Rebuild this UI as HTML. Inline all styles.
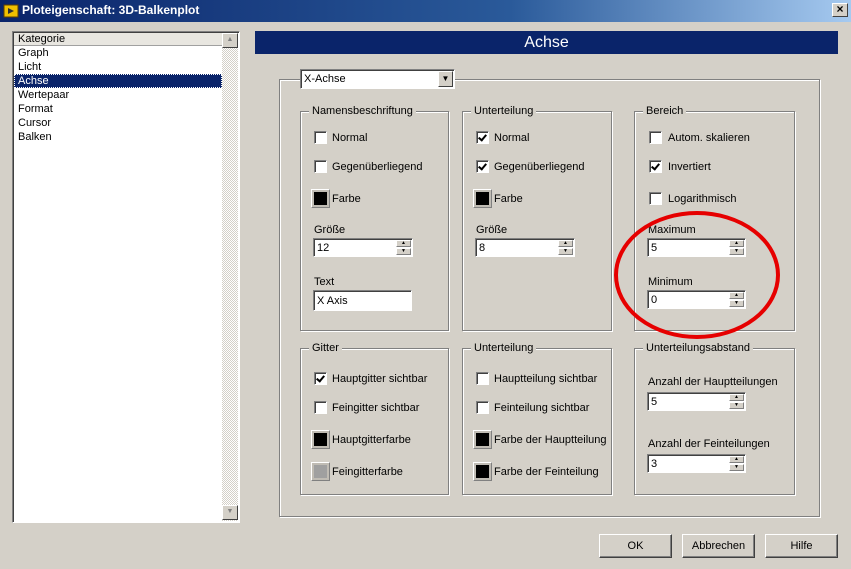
<!DOCTYPE html>
<html><head><meta charset="utf-8"><style>
*{box-sizing:border-box}
body{margin:0;width:851px;height:569px;background:#d4d0c8;font-family:"Liberation Sans",Tahoma,sans-serif;font-size:11px;color:#000;position:relative;overflow:hidden}
.a{position:absolute}
.title{left:0;top:0;width:851px;height:22px;background:linear-gradient(90deg,#0a246a 0%,#2a5a9a 60%,#a6caf0 100%);}
.title span{position:absolute;left:22px;top:3px;color:#fff;font-weight:bold;font-size:12px}
.close{right:3px;top:3px;width:16px;height:14px;background:#d4d0c8;border:1px solid;border-color:#fff #404040 #404040 #fff;font-size:12px;line-height:11px;text-align:center;font-weight:bold}
.grp{border:1px solid #808080;box-shadow:1px 1px 0 #fff, inset 1px 1px 0 #fff}
.gl{position:absolute;top:-7px;left:8px;background:#d4d0c8;padding:0 3px;line-height:13px}
.cb{position:absolute;width:13px;height:13px;background:#fff;border:1px solid;border-color:#808080 #fff #fff #808080;box-shadow:inset 1px 1px 0 #404040}
.cb.c::after{content:"";position:absolute;left:3px;top:1px;width:3px;height:6px;border:solid #000;border-width:0 2px 2px 0;transform:rotate(40deg)}
.lb{position:absolute;line-height:13px;white-space:nowrap}
.sw{position:absolute;width:19px;height:19px;background:#c0bcb4;border:1px solid;border-color:#fff #808080 #808080 #fff}
.sw i{position:absolute;left:2px;top:2px;width:13px;height:13px;background:#000}
.in{position:absolute;height:19px;background:#fff;border:1px solid;border-color:#808080 #fff #fff #808080;box-shadow:inset 1px 1px 0 #404040;padding:3px 3px 0;line-height:13px}
.sp{position:absolute;right:1px;top:1px;width:15px;height:15px}
.sp b{display:block;height:7px;background:#d4d0c8;border:1px solid;border-color:#fff #808080 #808080 #fff;margin-bottom:1px;font-size:5px;line-height:5px;text-align:center;font-weight:normal}
.btn{position:absolute;height:24px;width:73px;background:#d4d0c8;border:1px solid;border-color:#fff #404040 #404040 #fff;box-shadow:inset -1px -1px 0 #808080;text-align:center;line-height:22px;font-size:11px}
</style></head><body>
<div class="a title"><svg class="a" style="left:3px;top:3px" width="16" height="16"><rect x="1" y="2" width="14" height="12" fill="#f0c000" stroke="#604000"/><polygon points="5,5 11,8 5,11" fill="#303030"/></svg><span>Ploteigenschaft: 3D-Balkenplot</span></div>
<div class="a close">×</div>

<div class="a" style="left:12px;top:31px;width:228px;height:492px;background:#fff;border:1px solid;border-color:#808080 #fff #fff #808080;box-shadow:inset 1px 1px 0 #404040"></div>
<div class="a" style="left:14px;top:33px;width:208px;height:13px;background:#e8e6e0;border-bottom:1px solid #a0a0a0;padding-left:4px;line-height:12px">Kategorie</div>
<div class="a" style="left:222px;top:33px;width:16px;height:488px;background:repeating-conic-gradient(#d4d0c8 0 25%,#fff 0 50%) 0 0/2px 2px"></div>
<div class="a" style="left:222px;top:33px;width:16px;height:15px;background:#d4d0c8;border:1px solid;border-color:#fff #404040 #404040 #fff;font-size:7px;text-align:center;color:#808080;line-height:12px">▲</div>
<div class="a" style="left:222px;top:505px;width:16px;height:15px;background:#d4d0c8;border:1px solid;border-color:#fff #404040 #404040 #fff;font-size:7px;text-align:center;color:#808080;line-height:12px">▼</div>
<div class="a" style="left:14px;top:46px;line-height:14px;width:208px">
<div style="padding-left:4px">Graph</div><div style="padding-left:4px">Licht</div>
<div style="padding-left:4px;background:#0a246a;color:#fff;outline:1px dotted #fff;outline-offset:-1px">Achse</div>
<div style="padding-left:4px">Wertepaar</div><div style="padding-left:4px">Format</div><div style="padding-left:4px">Cursor</div><div style="padding-left:4px">Balken</div></div>

<div class="a" style="left:255px;top:31px;width:583px;height:23px;background:#0a246a;color:#fff;font-size:16px;text-align:center;line-height:23px">Achse</div>

<div class="a grp" style="left:279px;top:79px;width:541px;height:438px"></div>
<div class="a in" style="left:300px;top:69px;width:155px;height:20px;box-shadow:inset 1px 1px 0 #404040">X-Achse</div>
<div class="a" style="left:438px;top:71px;width:15px;height:16px;background:#d4d0c8;border:1px solid;border-color:#fff #404040 #404040 #fff;font-size:8px;text-align:center;line-height:14px">▼</div>

<div class="a grp" style="left:300px;top:111px;width:149px;height:220px"><span class="gl">Namensbeschriftung</span></div>
<div class="a grp" style="left:462px;top:111px;width:150px;height:220px"><span class="gl">Unterteilung</span></div>
<div class="a grp" style="left:634px;top:111px;width:161px;height:220px"><span class="gl">Bereich</span></div>
<div class="a grp" style="left:300px;top:348px;width:149px;height:147px"><span class="gl">Gitter</span></div>
<div class="a grp" style="left:462px;top:348px;width:150px;height:147px"><span class="gl">Unterteilung</span></div>
<div class="a grp" style="left:634px;top:348px;width:161px;height:147px"><span class="gl">Unterteilungsabstand</span></div>

<div class="cb" style="left:314px;top:131px"></div><div class="lb" style="left:332px;top:132px">Normal</div>
<div class="cb" style="left:314px;top:160px"></div><div class="lb" style="left:332px;top:161px">Gegenüberliegend</div>
<div class="sw" style="left:311px;top:189px"><i></i></div><div class="lb" style="left:332px;top:193px">Farbe</div>
<div class="lb" style="left:314px;top:224px">Größe</div>
<div class="in" style="left:313px;top:238px;width:100px">12<div class="sp"><b>▲</b><b>▼</b></div></div>
<div class="lb" style="left:314px;top:276px">Text</div>
<div class="in" style="left:313px;top:290px;width:99px;height:21px;padding-top:4px">X Axis</div>

<div class="cb c" style="left:476px;top:131px"></div><div class="lb" style="left:494px;top:132px">Normal</div>
<div class="cb c" style="left:476px;top:160px"></div><div class="lb" style="left:494px;top:161px">Gegenüberliegend</div>
<div class="sw" style="left:473px;top:189px"><i></i></div><div class="lb" style="left:494px;top:193px">Farbe</div>
<div class="lb" style="left:476px;top:224px">Größe</div>
<div class="in" style="left:475px;top:238px;width:100px">8<div class="sp"><b>▲</b><b>▼</b></div></div>

<div class="cb" style="left:649px;top:131px"></div><div class="lb" style="left:668px;top:132px">Autom. skalieren</div>
<div class="cb c" style="left:649px;top:160px"></div><div class="lb" style="left:668px;top:161px">Invertiert</div>
<div class="cb" style="left:649px;top:192px"></div><div class="lb" style="left:668px;top:193px">Logarithmisch</div>
<div class="lb" style="left:648px;top:224px">Maximum</div>
<div class="in" style="left:647px;top:238px;width:99px">5<div class="sp"><b>▲</b><b>▼</b></div></div>
<div class="lb" style="left:648px;top:276px">Minimum</div>
<div class="in" style="left:647px;top:290px;width:99px">0<div class="sp"><b>▲</b><b>▼</b></div></div>

<div class="cb c" style="left:314px;top:372px"></div><div class="lb" style="left:332px;top:373px">Hauptgitter sichtbar</div>
<div class="cb" style="left:314px;top:401px"></div><div class="lb" style="left:332px;top:402px">Feingitter sichtbar</div>
<div class="sw" style="left:311px;top:430px"><i></i></div><div class="lb" style="left:332px;top:434px">Hauptgitterfarbe</div>
<div class="sw" style="left:311px;top:462px"><i style="background:#a0a0a0"></i></div><div class="lb" style="left:332px;top:466px">Feingitterfarbe</div>

<div class="cb" style="left:476px;top:372px"></div><div class="lb" style="left:494px;top:373px">Hauptteilung sichtbar</div>
<div class="cb" style="left:476px;top:401px"></div><div class="lb" style="left:494px;top:402px">Feinteilung sichtbar</div>
<div class="sw" style="left:473px;top:430px"><i></i></div><div class="lb" style="left:494px;top:434px">Farbe der Hauptteilung</div>
<div class="sw" style="left:473px;top:462px"><i></i></div><div class="lb" style="left:494px;top:466px">Farbe der Feinteilung</div>

<div class="lb" style="left:648px;top:376px">Anzahl der Hauptteilungen</div>
<div class="in" style="left:647px;top:392px;width:99px">5<div class="sp"><b>▲</b><b>▼</b></div></div>
<div class="lb" style="left:648px;top:438px">Anzahl der Feinteilungen</div>
<div class="in" style="left:647px;top:454px;width:99px">3<div class="sp"><b>▲</b><b>▼</b></div></div>

<div class="btn" style="left:599px;top:534px">OK</div>
<div class="btn" style="left:682px;top:534px">Abbrechen</div>
<div class="btn" style="left:765px;top:534px">Hilfe</div>

<svg class="a" style="left:0;top:0" width="851" height="569"><ellipse cx="697" cy="275" rx="81" ry="62" fill="none" stroke="#e60000" stroke-width="4"/></svg>
</body></html>
